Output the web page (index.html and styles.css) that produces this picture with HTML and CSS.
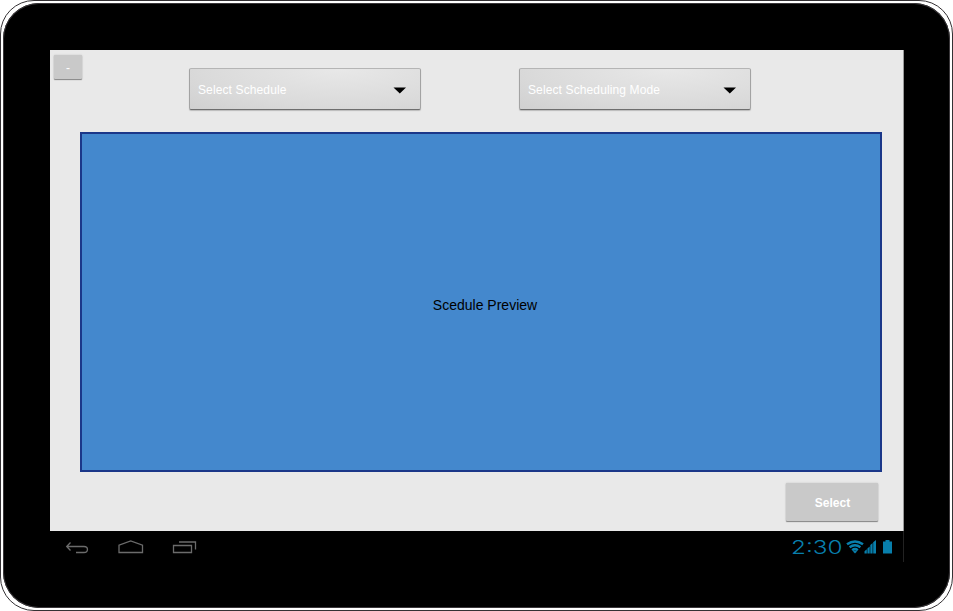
FILE: index.html
```html
<!DOCTYPE html>
<html lang="en">
<head>
<meta charset="utf-8">
<title>Schedule</title>
<link rel="stylesheet" href="styles.css">
</head>
<body>
<div class="device">
<div class="bezel">
  <main class="screen">
    <header class="toolbar">
      <button class="btn collapse">-</button>
      <button class="spinner"><span>Select Schedule</span>
        <svg width="14" height="7" viewBox="0 0 14 7"><path d="M0.5 0.5h12.5L6.8 6.6z"/></svg>
      </button>
      <button class="spinner"><span>Select Scheduling Mode</span>
        <svg width="14" height="7" viewBox="0 0 14 7"><path d="M0.5 0.5h12.5L6.8 6.6z"/></svg>
      </button>
    </header>
    <section class="preview"><span>Scedule Preview</span></section>
    <footer class="actions"><button class="btn select">Select</button></footer>
  </main>
  <nav class="navbar">
    <svg width="154" height="31" viewBox="0 0 154 31" fill="none" stroke="#6b6b6b" stroke-width="1.3">
      <path d="M20.5 11.5L16.7 15.5l3.8 4M17 15.5h17c4.6 0 4.6 6 0 6h-8"/>
      <path d="M69 21.5v-7.4l11.7-4.2 11.8 4.2v7.4z"/>
      <path d="M123.5 14.5h18v7h-18zM129 11h16.5v7.5"/>
    </svg>
    <svg class="status" width="104" height="31" viewBox="0 0 104 31" fill="#087fac">
      <g fill="none" stroke="#087fac" stroke-width="2.5">
        <path d="M55 13.2q8-5.6 16 0M57.6 16.3q5.4-4 10.8 0M60.2 19.2q2.8-2.2 5.6 0"/>
      </g>
      <path d="M60.9 20.4q2.1-1.4 4.2 0L63 22.6z"/>
      <path d="M72.5 22.5v-2.2l2.3-2v4.2zM75.4 22.5v-5l2.3-2v7zM78.3 22.5v-8.4l2.3-2v10.4zM81.2 22.5V11.3l2.8-2.3v13.5z"/>
      <path d="M91 10.5h2.5V9h4v1.5h2.5v12h-9z"/>
      <text class="clock" x="-1" y="22.5" textLength="51.5" lengthAdjust="spacingAndGlyphs">2:30</text>
    </svg>
  </nav>
</div>
</div>
</body>
</html>
```
FILE: styles.css
```css
* {
  box-sizing: border-box;
}

body {
  margin: 0;
  background: #fff;
  font-family: "Liberation Sans", Arial, sans-serif;
}

.device {
  width: 953px;
  height: 611px;
  overflow: hidden;
  padding: 2px;
  border: 1px solid #343134;
  border-radius: 34px;
  background: #fff;
}

.bezel {
  height: 605px;
  padding: 47px 46px 46px 47px;
  border-radius: 36px;
  background: #000;
  box-shadow: inset 0 0 0 1px #3a373a;
}

.screen {
  display: flex;
  flex-direction: column;
  width: 854px;
  height: 481px;
  border-right: 1px solid #999;
  background: #e9e9e9;
}

.toolbar {
  display: flex;
  align-items: flex-start;
  height: 82px;
  padding: 5px 4px;
}

button {
  border: 0;
  padding: 0;
  font-family: inherit;
  color: #fff;
}

.btn {
  border-radius: 1px;
  background: #c9c9c9;
  box-shadow: 0 1px 1px #858585, 0 0 2px #c0c0c0;
}

.collapse {
  width: 28px;
  height: 24px;
  padding-top: 2px;
  font-size: 12px;
}

.spinner {
  display: flex;
  align-items: center;
  justify-content: space-between;
  width: 232px;
  height: 42px;
  margin: 13px 0 0 107px;
  padding: 0 13px 0 8px;
  border: 1px solid #a3a3a3;
  border-top-color: #b5b5b5;
  border-bottom-color: #6e6e6e;
  border-radius: 2px;
  background: radial-gradient(ellipse at 65% 0, #e8e8e8 0, #dadada 65%, #d0d0d0 100%);
  box-shadow: 0 1px 1px #bbb;
  font-size: 12px;
  letter-spacing: 0.12px;
}

.spinner span {
  padding-top: 2px;
}

.spinner + .spinner {
  margin-left: 98px;
}

.spinner svg {
  margin-top: 2px;
}

.preview {
  display: flex;
  align-items: center;
  justify-content: center;
  width: 802px;
  height: 340px;
  margin-left: 30px;
  padding: 5px 0 0 8px;
  border: 2px solid #1b3789;
  background: #4488cd;
  font-size: 14px;
  color: #000;
}

.actions {
  display: flex;
  justify-content: flex-end;
  padding: 11px 25px 0 0;
}

.select {
  width: 92px;
  height: 38px;
  padding: 2px 0 0 1px;
  font-size: 12px;
  font-weight: bold;
}

.navbar {
  display: flex;
  justify-content: space-between;
  width: 854px;
  height: 31px;
  border-right: 1px solid #222;
}

.status {
  margin-right: 7px;
}

.clock {
  font-family: Inter, "Liberation Sans", sans-serif;
  font-size: 18.5px;
  font-weight: 300;
}
```
